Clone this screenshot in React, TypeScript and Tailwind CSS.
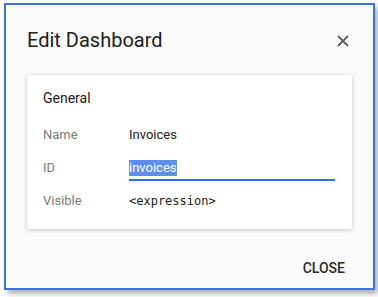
import React from "react";

export default function App() {
  const rows = [
    { label: "Name", value: "Invoices" },
  ];

  return (
    <div className="w-[378px] h-[297px] bg-white pl-[4px] pt-[3px] font-[Roboto]">
      <div className="w-[371px] h-[287px] bg-[#fafafa] border-2 border-[#3d72d6] shadow-[3px_4px_5px_rgba(0,0,0,0.3)] flex flex-col">
        <div className="flex items-center justify-between pl-[21px] pr-[24px] pt-[20px] h-[50px]">
          <h1 className="text-[20px] text-[#212121] leading-[24px]">Edit Dashboard</h1>
          <svg width="12" height="12" viewBox="0 0 12 12" className="mt-[1px]">
            <path d="M1 1 L11 11 M11 1 L1 11" stroke="#5f5f5f" strokeWidth="1.8" />
          </svg>
        </div>

        <div className="mx-[21px] mt-[20px] h-[154px] bg-white rounded-[2px] shadow-[0_1px_4px_rgba(0,0,0,0.22)] px-[16px] pt-[14px]">
          <div className="text-[14px] text-[#212121] leading-[18px]">General</div>

          <div className="mt-[19px] flex flex-col">
            {rows.map((r) => (
              <div key={r.label} className="flex items-center h-[18px]">
                <span className="w-[86px] text-[13px] text-[#7a7a7a]">{r.label}</span>
                <span className="text-[13px] text-[#212121]">{r.value}</span>
              </div>
            ))}

            <div className="flex items-center mt-[11px]">
              <span className="w-[86px] text-[13px] text-[#7a7a7a]">ID</span>
              <div className="w-[206px] border-b-2 border-[#2f6ee0]">
                <span className="bg-[#5c8ff0] text-white text-[13px] leading-[16px] inline-block">invoices</span>
              </div>
            </div>

            <div className="flex items-center mt-[11px] h-[18px]">
              <span className="w-[86px] text-[13px] text-[#7a7a7a]">Visible</span>
              <span className="text-[12px] text-[#212121] font-['DejaVu_Sans_Mono']">&lt;expression&gt;</span>
            </div>
          </div>
        </div>

        <div className="flex justify-end pr-[28px] mt-[29px]">
          <span className="text-[14px] font-medium text-[#2a2a2a]">CLOSE</span>
        </div>
      </div>
    </div>
  );
}
